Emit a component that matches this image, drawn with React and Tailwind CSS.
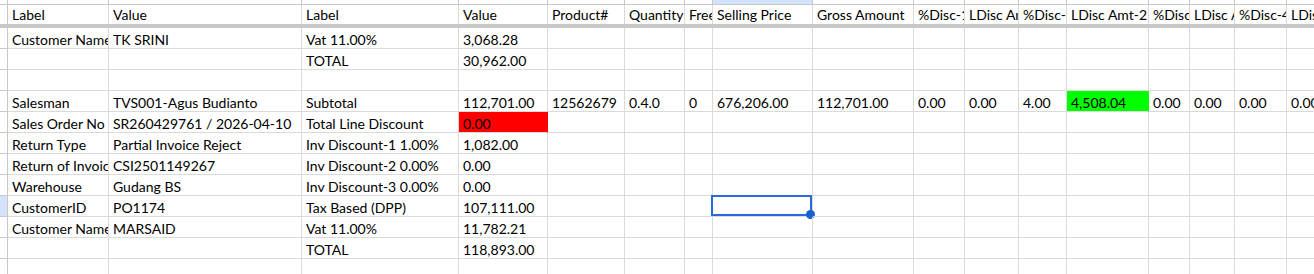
import React from 'react';

const COLS = [
  'w-[101px]', 'w-[193px]', 'w-[157px]', 'w-[89px]', 'w-[77px]', 'w-[60px]', 'w-[28px]', 'w-[100px]',
  'w-[101px]', 'w-[51px]', 'w-[54px]', 'w-[48px]', 'w-[82px]', 'w-[41px]', 'w-[45px]', 'w-[52px]', 'w-[100px]',
];

const HEADERS = [
  'Label', 'Value', 'Label', 'Value', 'Product#', 'Quantity', 'Free', 'Selling Price', 'Gross Amount',
  '%Disc-1', 'LDisc Amt-1', '%Disc-2', 'LDisc Amt-2', '%Disc-3', 'LDisc Amt-3', '%Disc-4', 'LDisc Amt-4',
];

const ROWS = [
  { h: 'h-[21px]', cells: ['Customer Name', 'TK SRINI', 'Vat 11.00%', '3,068.28'] },
  { h: 'h-[21px]', cells: ['', '', 'TOTAL', '30,962.00'] },
  { h: 'h-[21px]', cells: [] },
  {
    h: 'h-[21px]',
    cells: ['Salesman', 'TVS001-Agus Budianto', 'Subtotal', '112,701.00', '12562679', '0.4.0', '0', '676,206.00',
      '112,701.00', '0.00', '0.00', '4.00', '4,508.04', '0.00', '0.00', '0.00', '0.00'],
    fills: { 12: 'bg-[#00ff00] border-r-[#00ff00]' },
  },
  {
    h: 'h-[21px]',
    cells: ['Sales Order No', 'SR260429761 / 2026-04-10', 'Total Line Discount', '0.00'],
    fills: { 3: 'bg-[#ff0000] border-r-[#ff0000]' },
  },
  { h: 'h-[21px]', cells: ['Return Type', 'Partial Invoice Reject', 'Inv Discount-1 1.00%', '1,082.00'] },
  { h: 'h-[21px]', cells: ['Return of Invoice', 'CSI2501149267', 'Inv Discount-2 0.00%', '0.00'] },
  { h: 'h-[21px]', cells: ['Warehouse', 'Gudang BS', 'Inv Discount-3 0.00%', '0.00'] },
  { h: 'h-[21px]', cells: ['CustomerID', 'PO1174', 'Tax Based (DPP)', '107,111.00'], active: true },
  { h: 'h-[21px]', cells: ['Customer Name', 'MARSAID', 'Vat 11.00%', '11,782.21'] },
  { h: 'h-[21px]', cells: ['', '', 'TOTAL', '118,893.00'] },
  { h: 'h-[21px]', cells: [] },
];

const cellBase = 'shrink-0 h-full border-r border-b border-[#dadada] whitespace-nowrap flex items-end pl-[4px] pb-0';

function Row({ row }) {
  return (
    <div className={`flex ${row.h}`}>
      <div className={`w-[8px] shrink-0 h-full border-r border-b border-[#c8c8c8] ${row.active ? 'bg-[#d3e3fb]' : 'bg-white'}`} />
      {COLS.map((w, i) => {
        const fill = row.fills && row.fills[i] ? row.fills[i] : '';
        return (
          <div key={i} className={`${w} ${cellBase} ${fill} relative`}>
            <span className="block overflow-hidden w-full">{row.cells[i] || ''}</span>
            {row.active && i === 7 && (
              <div className="absolute -left-[2px] -top-px right-0 bottom-0 border-2 border-[#2a6bd9] pointer-events-none">
                <div className="absolute -right-[5px] -bottom-[5px] w-[9px] h-[9px] rounded-full bg-[#1b5fd3]" />
              </div>
            )}
          </div>
        );
      })}
    </div>
  );
}

export default function App() {
  return (
    <div className="w-[1314px] h-[274px] overflow-hidden bg-white text-black text-[14px] leading-[17px]" style={{ fontFamily: 'Lato, "Open Sans", sans-serif' }}>
      {/* column header strip (scrolled) */}
      <div className="flex h-[5px]">
        <div className="w-[8px] shrink-0 h-full border-r border-b border-[#c8c8c8]" />
        {COLS.map((w, i) => (
          <div key={i} className={`${w} shrink-0 h-full border-r border-b border-[#c8c8c8] ${i === 7 ? 'bg-[#d3e3fb]' : 'bg-white'}`} />
        ))}
      </div>

      {/* frozen header row */}
      <div className="flex h-[19px]">
        <div className="w-[8px] shrink-0 h-full border-r border-[#c8c8c8]" />
        {COLS.map((w, i) => (
          <div key={i} className={`${w} shrink-0 h-full border-r border-[#dadada] overflow-hidden whitespace-nowrap flex items-end pl-[4px] pb-[1px]`}>
            {HEADERS[i]}
          </div>
        ))}
      </div>
      <div className="h-[4px] bg-[#c8c8c8]" />

      {ROWS.map((r, i) => <Row key={i} row={r} />)}
    </div>
  );
}
